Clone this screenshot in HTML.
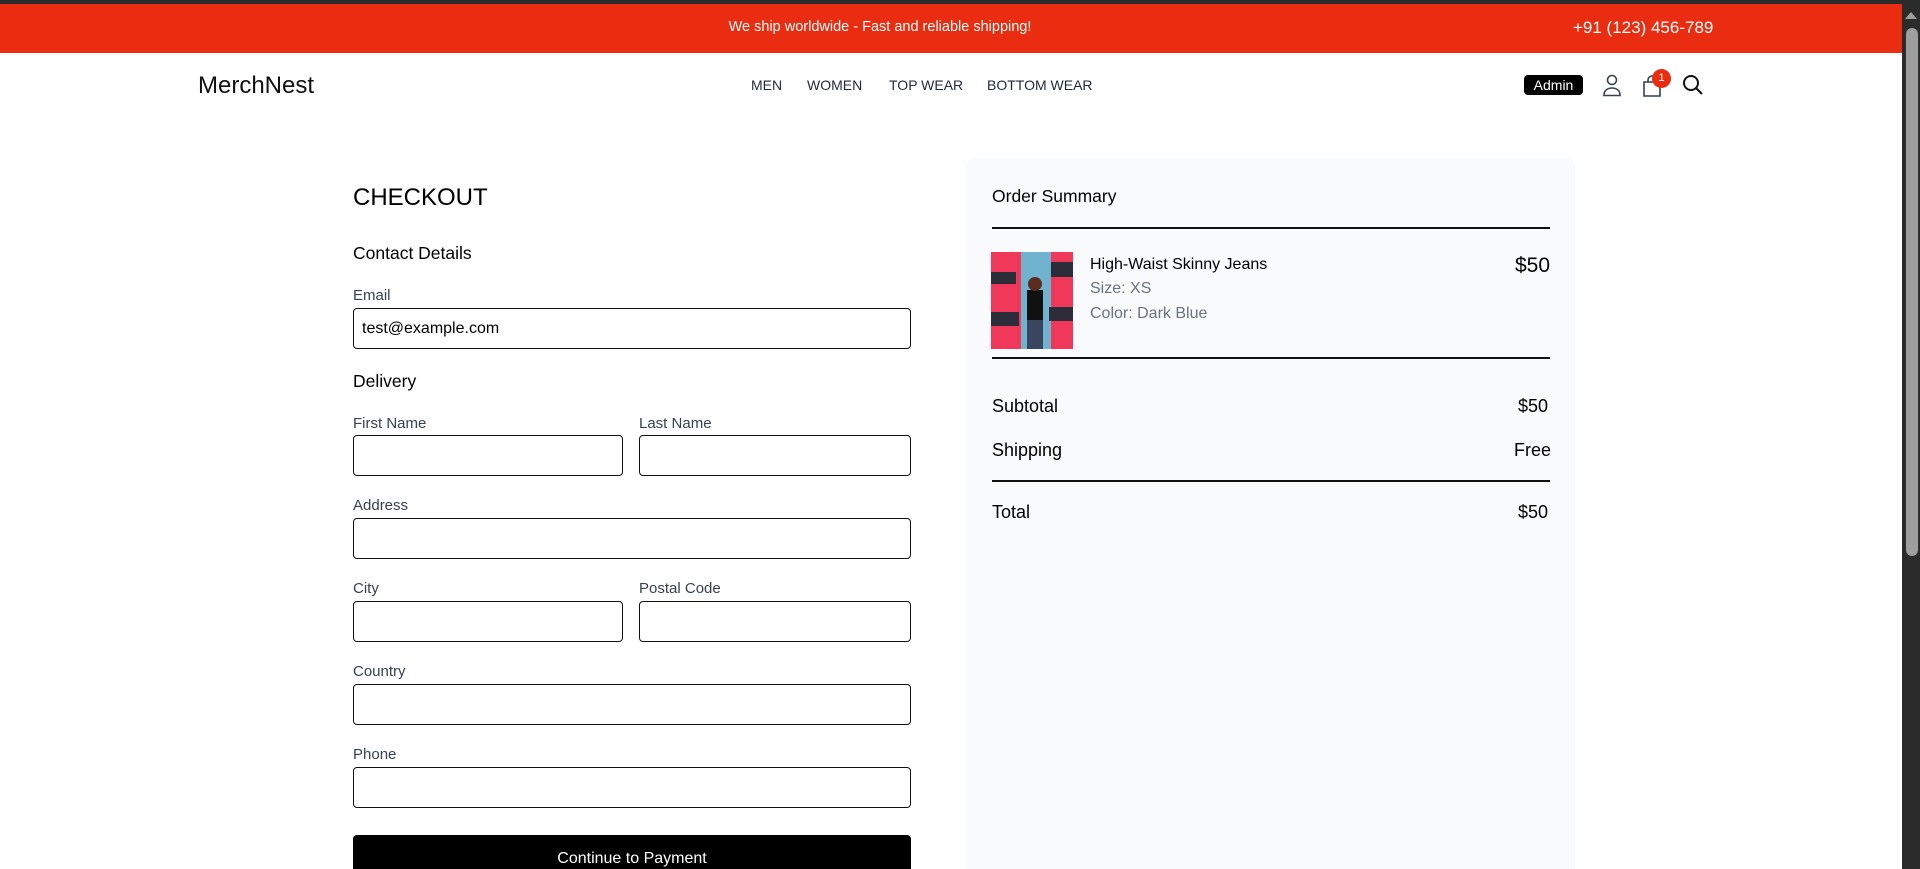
<!DOCTYPE html>
<html style="overflow:hidden;height:869px"><head><meta charset="utf-8"><style>
*{margin:0;padding:0;box-sizing:border-box}
body{width:1920px;height:869px;overflow:hidden;background:#fff;font-family:"Liberation Sans",sans-serif;color:#000;position:relative}
.a{position:absolute;white-space:nowrap}
.lbl{font-size:15px;color:#374151}
.in{position:absolute;border:1.5px solid #111;border-radius:4px;height:41px;background:#fff}
.nav{font-size:14px;color:#1f2937;top:77px}
.row{font-size:18px}
</style></head><body>
<div class="a" style="left:0;top:0;width:1920px;height:4px;background:#2b2b2b"></div>
<div class="a" style="left:0;top:4px;width:1902px;height:49px;background:#ea2c10"></div>
<div class="a" style="left:0;top:19px;width:1760px;text-align:center;color:#fff;font-size:14.5px">We ship worldwide - Fast and reliable shipping!</div>
<div class="a" style="left:1573px;top:18px;color:#fff;font-size:17px">+91 (123) 456-789</div>

<div class="a" style="left:198px;top:72px;font-size:24px;color:#111">MerchNest</div>
<div class="a nav" style="left:751px">MEN</div>
<div class="a nav" style="left:807px">WOMEN</div>
<div class="a nav" style="left:889px">TOP WEAR</div>
<div class="a nav" style="left:987px">BOTTOM WEAR</div>
<div class="a" style="left:1524px;top:75px;width:59px;height:20px;background:#000;border-radius:4px;color:#fff;font-size:14px;text-align:center;line-height:20px">Admin</div>
<svg class="a" style="left:1600px;top:72px" width="24" height="26" viewBox="0 0 24 26" fill="none" stroke="#374151" stroke-width="1.6"><circle cx="12" cy="8" r="4.5"/><path d="M4 23c0-4.5 3.6-7 8-7s8 2.5 8 7v0.5H4z"/></svg>
<svg class="a" style="left:1640px;top:73px" width="24" height="26" viewBox="0 0 24 26" fill="none" stroke="#374151" stroke-width="1.6"><path d="M4 9h16v14H4z"/><path d="M8 9V7a4 4 0 0 1 8 0v2"/></svg>
<div class="a" style="left:1652px;top:69px;width:19px;height:19px;border-radius:50%;background:#ea2c10;color:#fff;font-size:11px;text-align:center;line-height:19px">1</div>
<svg class="a" style="left:1681px;top:73px" width="24" height="24" viewBox="0 0 24 24" fill="none" stroke="#111" stroke-width="2"><circle cx="10" cy="10" r="7"/><path d="M15 15l6 6"/></svg>
<div class="a" style="left:1902px;top:0;width:18px;height:869px;background:#2b2b2b"></div>
<svg class="a" style="left:1904px;top:10px" width="14" height="10" viewBox="0 0 14 10"><path d="M1 9L7 2l6 7z" fill="#9e9e9e"/></svg>
<div class="a" style="left:1906px;top:28px;width:12px;height:528px;background:#9e9e9e;border-radius:6px"></div>

<div class="a" style="left:353px;top:184px;font-size:24px">CHECKOUT</div>
<div class="a" style="left:353px;top:243px;font-size:17.5px">Contact Details</div>
<div class="a lbl" style="left:353px;top:287px">Email</div>
<div class="in" style="left:353px;top:308px;width:558px"><span class="a" style="left:8px;top:11px;font-size:16px">test@example.com</span></div>
<div class="a" style="left:353px;top:371px;font-size:17.5px">Delivery</div>
<div class="a lbl" style="left:353px;top:415px">First Name</div>
<div class="a lbl" style="left:639px;top:415px">Last Name</div>
<div class="in" style="left:353px;top:435px;width:270px"></div>
<div class="in" style="left:639px;top:435px;width:272px"></div>
<div class="a lbl" style="left:353px;top:497px">Address</div>
<div class="in" style="left:353px;top:518px;width:558px"></div>
<div class="a lbl" style="left:353px;top:580px">City</div>
<div class="a lbl" style="left:639px;top:580px">Postal Code</div>
<div class="in" style="left:353px;top:601px;width:270px"></div>
<div class="in" style="left:639px;top:601px;width:272px"></div>
<div class="a lbl" style="left:353px;top:663px">Country</div>
<div class="in" style="left:353px;top:684px;width:558px"></div>
<div class="a lbl" style="left:353px;top:746px">Phone</div>
<div class="in" style="left:353px;top:767px;width:558px"></div>
<div class="a" style="left:353px;top:835px;width:558px;height:34px;background:#000;border-radius:4px 4px 0 0;color:#fff;font-size:16px;text-align:center;padding-top:15px;overflow:hidden">Continue to Payment</div>

<div class="a" style="left:967px;top:158px;width:608px;height:711px;background:#f9fafb;border-radius:8px 8px 0 0"></div>
<div class="a" style="left:992px;top:186px;font-size:17.5px">Order Summary</div>
<div class="a" style="left:992px;top:227px;width:558px;height:1.5px;background:#111"></div>
<svg class="a" style="left:991px;top:252px" width="82" height="97" viewBox="0 0 82 97">
<rect width="82" height="97" fill="#f0385a"/><rect x="30" y="0" width="30" height="97" fill="#6fb3cf"/>
<path d="M0 20h25v12H0zM60 10h22v15H60zM0 60h28v14H0zM58 55h24v14H58z" fill="#2d2d3a"/>
<rect x="36" y="38" width="16" height="32" fill="#111"/><circle cx="44" cy="32" r="7" fill="#5a2d1f"/>
<rect x="36" y="68" width="16" height="29" fill="#3a4660"/></svg>
<div class="a" style="left:1090px;top:256px;font-size:16px">High-Waist Skinny Jeans</div>
<div class="a" style="left:1090px;top:280px;font-size:16px;color:#6b7280">Size: XS</div>
<div class="a" style="left:1090px;top:305px;font-size:16px;color:#6b7280">Color: Dark Blue</div>
<div class="a" style="left:1515px;top:254px;font-size:21px">$50</div>
<div class="a" style="left:992px;top:357px;width:558px;height:1.5px;background:#111"></div>
<div class="a row" style="left:992px;top:396px">Subtotal</div>
<div class="a row" style="left:1518px;top:396px">$50</div>
<div class="a row" style="left:992px;top:440px">Shipping</div>
<div class="a row" style="left:1514px;top:440px">Free</div>
<div class="a" style="left:992px;top:480px;width:558px;height:1.5px;background:#111"></div>
<div class="a row" style="left:992px;top:502px">Total</div>
<div class="a row" style="left:1518px;top:502px">$50</div>
</body></html>
